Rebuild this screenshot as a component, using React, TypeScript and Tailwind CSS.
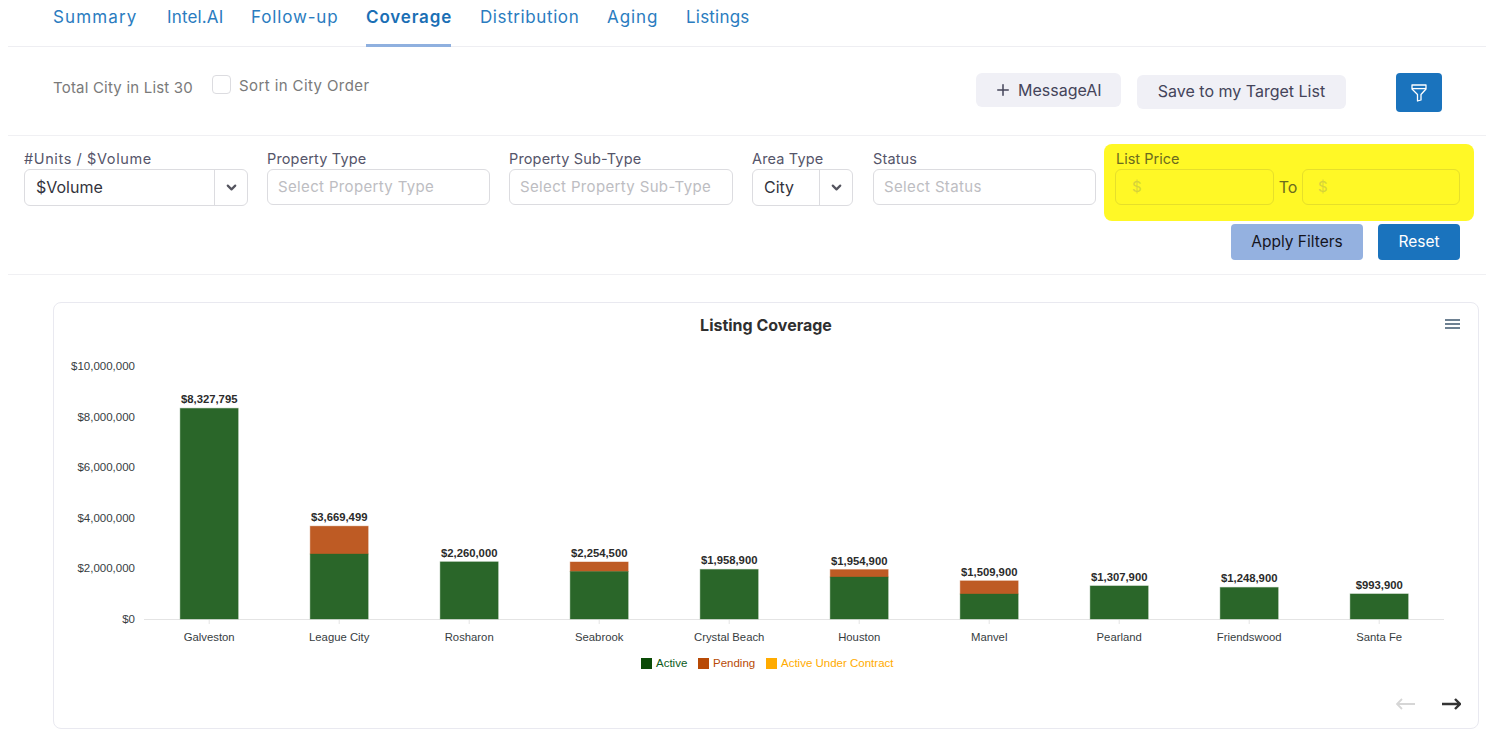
import { ChevronDown, Plus } from 'lucide-react'

const tabs = [
  { name: 'Summary', w: 'w-[85px]', track: 'tracking-[1.15px]' },
  { name: 'Intel.AI', w: 'w-[55px]', track: 'tracking-[0.15px]' },
  { name: 'Follow-up', w: 'w-[86px]', track: 'tracking-[0.85px]' },
  { name: 'Coverage', w: 'w-[85px]', track: 'tracking-[0.85px]', active: true },
  { name: 'Distribution', w: 'w-[98px]', track: 'tracking-[0.6px]' },
  { name: 'Aging', w: 'w-[50px]', track: 'tracking-[0.95px]' },
  { name: 'Listings', w: 'w-[62px]', track: 'tracking-[0.2px]' },
]

// page y of the zero line, and px per dollar
const baseY = 619
const scale = 253 / 10000000

const bars = [
  { city: 'Galveston', total: 8327795, label: '$8,327,795', activeTop: 408.3 },
  { city: 'League City', total: 3669499, label: '$3,669,499', activeTop: 554 },
  { city: 'Rosharon', total: 2260000, label: '$2,260,000', activeTop: 561.8 },
  { city: 'Seabrook', total: 2254500, label: '$2,254,500', activeTop: 571.5 },
  { city: 'Crystal Beach', total: 1958900, label: '$1,958,900', activeTop: 569.4 },
  { city: 'Houston', total: 1954900, label: '$1,954,900', activeTop: 577 },
  { city: 'Manvel', total: 1509900, label: '$1,509,900', activeTop: 594 },
  { city: 'Pearland', total: 1307900, label: '$1,307,900', activeTop: 585.9 },
  { city: 'Friendswood', total: 1248900, label: '$1,248,900', activeTop: 587.4 },
  { city: 'Santa Fe', total: 993900, label: '$993,900', activeTop: 593.9 },
]

const yTicks = [
  { label: '$10,000,000', y: 366 },
  { label: '$8,000,000', y: 416.5 },
  { label: '$6,000,000', y: 467 },
  { label: '$4,000,000', y: 517.5 },
  { label: '$2,000,000', y: 568 },
  { label: '$0', y: 619 },
]

const Field = ({ label, width, track, children }: { label: string; width: string; track?: string; children: React.ReactNode }) => (
  <div className={`${width} shrink-0 pt-[4px]`}>
    <div className={`h-[21px] text-[14.5px] leading-[21px] text-[#55556a] ${track ?? 'tracking-[0.15px]'}`}>{label}</div>
    {children}
  </div>
)

const TextBox = ({ placeholder }: { placeholder: string }) => (
  <div className="flex h-[36px] items-center rounded-md border border-[#dcdce0] pl-[10px] text-[15px] tracking-[0.35px] text-[#bdbdc2]">
    {placeholder}
  </div>
)

const SelectBox = ({ value, arrowWidth }: { value: string; arrowWidth: string }) => (
  <div className="flex h-[37px] items-center rounded-md border border-[#dcdce0] text-[16px] text-[#33333d]">
    <div className="flex-1 pb-[2px] pl-[11px]">{value}</div>
    <div className={`${arrowWidth} flex h-full items-center justify-center border-l border-[#dcdce0]`}>
      <ChevronDown className="h-[15px] w-[15px] text-[#55555f]" strokeWidth={3.5} />
    </div>
  </div>
)

const FunnelIcon = () => (
  <svg viewBox="0 0 16 18" className="h-[18px] w-[16px]" fill="none" stroke="currentColor" strokeWidth={1.3} strokeLinejoin="round">
    <path d="M1 1H15V5L10 10.5V16L6.5 17V10.5L1 5Z" />
    <path d="M1 4.6H15" />
  </svg>
)

const NavArrow = ({ flip, className, width }: { flip?: boolean; className: string; width: number }) => (
  <svg viewBox="0 0 19 12" className={`h-[12px] w-[19px] ${flip ? 'rotate-180' : ''} ${className}`} fill="none" stroke="currentColor" strokeWidth={width}>
    <path d="M0 6H18M13 1L18 6L13 11" />
  </svg>
)

const CoverageChart = () => (
  <svg viewBox="54 349 1424 331" className="block h-[331px] w-[1424px]" fontFamily="'Liberation Sans', Arial, sans-serif">
    {yTicks.map((t) => (
      <text key={t.label} x={135} y={t.y + 4} textAnchor="end" fontSize={11.5} fill="#373d3f">
        {t.label}
      </text>
    ))}
    <line x1={144} x2={1444} y1={619.5} y2={619.5} stroke="#e4e4e4" />
    {bars.map((b, i) => {
      const cx = 209.2 + i * 130
      const top = baseY - b.total * scale
      return (
        <g key={b.city}>
          <line x1={cx} x2={cx} y1={620} y2={624} stroke="#e4e4e4" />
          {b.activeTop > top + 0.5 && (
            <rect x={cx - 29} y={top} width={58} height={b.activeTop - top} fill="#be5b24" stroke="#be5b24" strokeOpacity={0.35} />
          )}
          <rect x={cx - 29} y={b.activeTop} width={58} height={baseY - b.activeTop} fill="#2a6629" stroke="#2a6629" strokeOpacity={0.35} />
          <text x={cx} y={top - 5} textAnchor="middle" fontSize={11.3} fontWeight={700} fill="#2b2b2b">
            {b.label}
          </text>
          <text x={cx} y={641} textAnchor="middle" fontSize={11.3} fill="#373d3f">
            {b.city}
          </text>
        </g>
      )
    })}
    <rect x={641} y={658} width={11} height={11} fill="#0b4b07" />
    <text x={656} y={667} fontSize={11.5} fill="#0b5a1a">Active</text>
    <rect x={698} y={658} width={11} height={11} fill="#b84a06" />
    <text x={713} y={667} fontSize={11.5} fill="#b84a06">Pending</text>
    <rect x={766} y={658} width={11} height={11} fill="#ffab00" />
    <text x={781} y={667} fontSize={11.5} fill="#ffab00">Active Under Contract</text>
  </svg>
)

export default function App() {
  return (
    <div className="h-[742px] w-[1497px] overflow-hidden bg-white font-['Inter',sans-serif]">
      <div className="ml-[8px] w-[1478px]">
        {/* Tabs */}
        <div className="flex h-[47px] gap-[29px] border-b border-[#eeeef2] pl-[45px]">
          {tabs.map((t) => (
            <div
              key={t.name}
              className={`${t.w} ${t.track} h-[47px] whitespace-nowrap pt-[5px] text-[17px] leading-[24px] ${
                t.active ? 'border-b-[3px] border-[#8fb0df] font-semibold text-[#1a6fb5]' : 'text-[#2a7cc0]'
              }`}
            >
              {t.name}
            </div>
          ))}
        </div>

        {/* Totals and actions */}
        <div className="flex h-[89px] items-start border-b border-[#f0f0f3]">
          <div className="ml-[45px] mt-[31px] w-[159px] whitespace-nowrap text-[15px] leading-[20px] tracking-[0.2px] text-[#7a7a7a]">
            Total City in List 30
          </div>
          <div className="mt-[28px] h-[19px] w-[19px] rounded-[4px] border border-[#dcdce0]" />
          <div className="ml-[8px] mt-[29px] whitespace-nowrap text-[15px] leading-[20px] tracking-[0.4px] text-[#7a7a7a]">
            Sort in City Order
          </div>
          <div className="ml-auto mr-[44px] flex items-start">
            <button className="mt-[26px] flex h-[34px] w-[145px] items-center gap-[6px] rounded-md bg-[#f0f0f6] pl-[18px] text-[16px] text-[#44445a]">
              <Plus className="h-[18px] w-[18px]" strokeWidth={2} />
              MessageAI
            </button>
            <button className="ml-[16px] mt-[28px] h-[34px] w-[209px] rounded-md bg-[#f0f0f6] pb-[2px] text-[16px] text-[#44445a]">
              Save to my Target List
            </button>
            <button className="ml-[50px] mt-[26px] flex h-[39px] w-[46px] items-center justify-center rounded-[4px] bg-[#1a73bd] text-white">
              <FunnelIcon />
            </button>
          </div>
        </div>

        {/* Filters */}
        <div className="h-[139px] border-b border-[#f0f0f3] pt-[8px]">
          <div className="flex items-start pl-[16px]">
            <Field label="#Units / $Volume" width="w-[224px]" track="tracking-[0.6px]">
              <SelectBox value="$Volume" arrowWidth="w-[33px]" />
            </Field>
            <div className="w-[19px]" />
            <Field label="Property Type" width="w-[223px]">
              <TextBox placeholder="Select Property Type" />
            </Field>
            <div className="w-[19px]" />
            <Field label="Property Sub-Type" width="w-[224px]">
              <TextBox placeholder="Select Property Sub-Type" />
            </Field>
            <div className="w-[19px]" />
            <Field label="Area Type" width="w-[101px]">
              <SelectBox value="City" arrowWidth="w-[33px]" />
            </Field>
            <div className="w-[20px]" />
            <Field label="Status" width="w-[223px]">
              <TextBox placeholder="Select Status" />
            </Field>
            <div className="ml-[8px] h-[77px] w-[370px] rounded-lg bg-[#fff826] pl-[11px] pt-[4px]">
              <div className="h-[21px] pl-[1px] text-[14.5px] leading-[21px] text-[#6b6b1e]">List Price</div>
              <div className="flex items-center">
                <div className="flex h-[36px] w-[159px] items-center rounded-md border border-[#e6df2a] pl-[16px] text-[15px] text-[#d6d33a]">
                  $
                </div>
                <div className="w-[28px] pb-[1px] text-center text-[16px] text-[#6b6b1e]">To</div>
                <div className="flex h-[36px] w-[158px] items-center rounded-md border border-[#e6df2a] pl-[15px] text-[15px] text-[#d6d33a]">
                  $
                </div>
              </div>
            </div>
          </div>
          <div className="mt-[3px] flex justify-end gap-[15px] pr-[26px]">
            <button className="h-[36px] w-[132px] rounded-[4px] bg-[#94b1e0] text-[15.5px] text-[#14141e]">Apply Filters</button>
            <button className="h-[36px] w-[82px] rounded-[4px] bg-[#1a73bd] text-[15.5px] text-white">Reset</button>
          </div>
        </div>
      </div>

      {/* Chart card */}
      <div className="relative ml-[53px] mt-[27px] h-[427px] w-[1426px] rounded-lg border border-[#e9e9f0]">
        <div className="h-[46px] pt-[11px] text-center text-[16px] font-bold leading-[22px] text-[#2f2f2f]">Listing Coverage</div>
        <div className="absolute right-[18px] top-[16px] flex h-[10px] w-[15px] flex-col justify-between">
          <div className="h-[2px] bg-[#6e8192]" />
          <div className="h-[2px] bg-[#6e8192]" />
          <div className="h-[2px] bg-[#6e8192]" />
        </div>
        <CoverageChart />
        <div className="flex h-[47px] items-center justify-end gap-[27px] pr-[17px]">
          <NavArrow flip className="text-[#d6d6d6]" width={1.8} />
          <NavArrow className="text-[#333333]" width={2.4} />
        </div>
      </div>
    </div>
  )
}
